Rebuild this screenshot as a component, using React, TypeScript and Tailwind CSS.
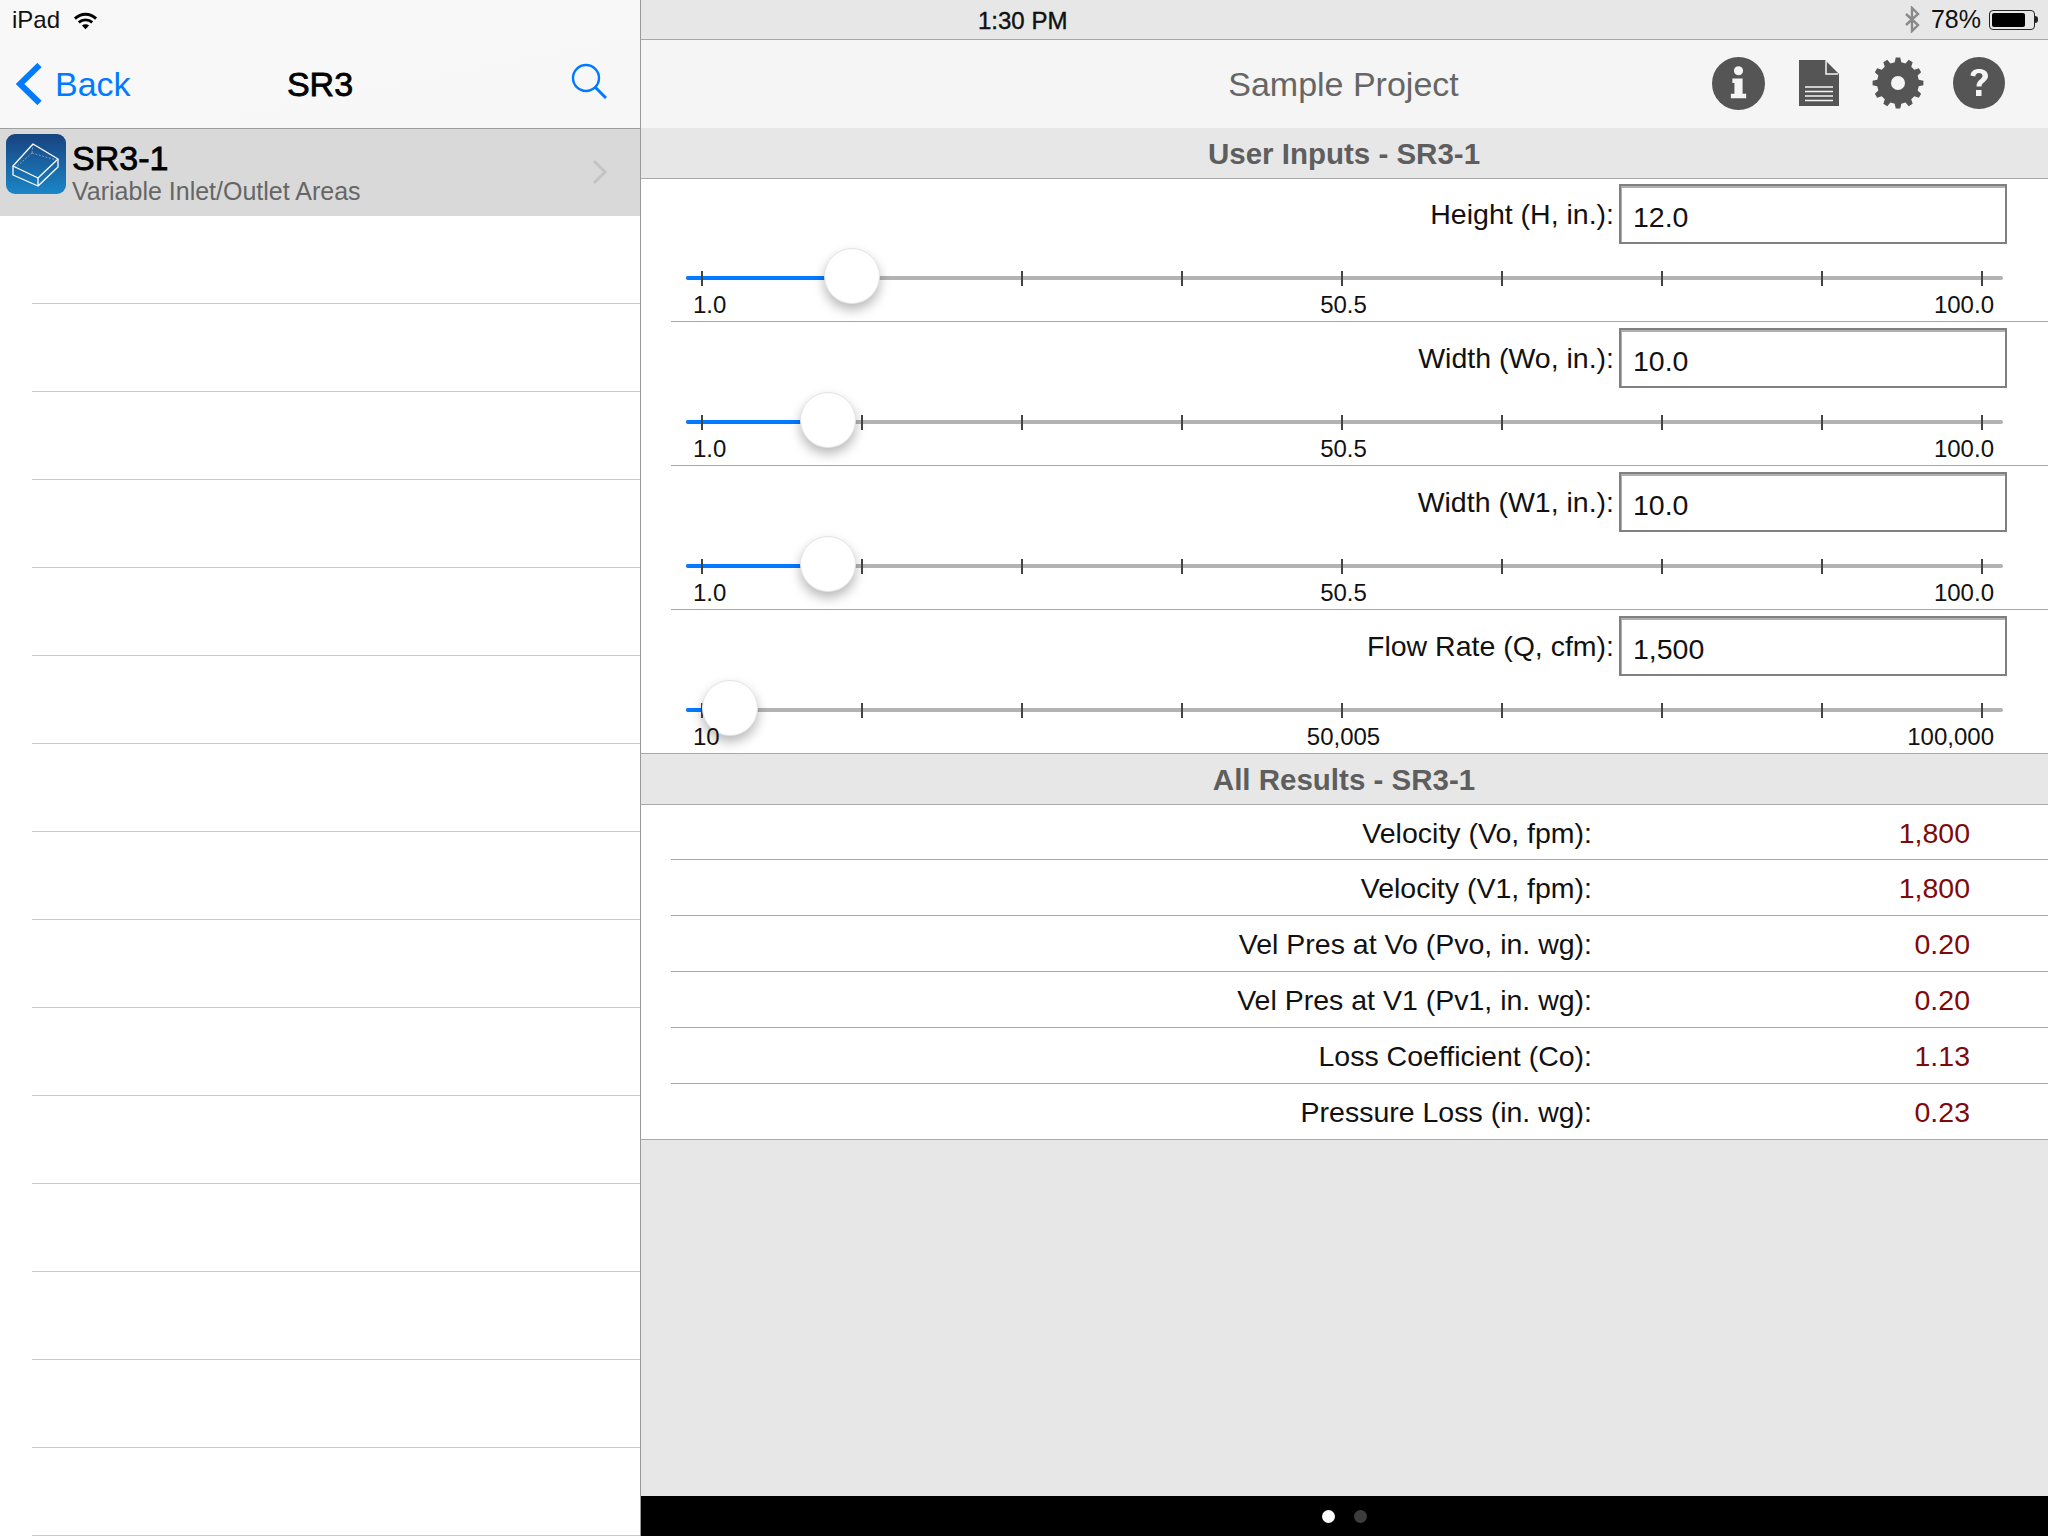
const TICKS = [0, 1, 2, 3, 4, 5, 6, 7, 8];

const INPUTS = [
  { label: "Height (H, in.):", value: "12.0", min: "1.0", mid: "50.5", max: "100.0", knob: 166 },
  { label: "Width (Wo, in.):", value: "10.0", min: "1.0", mid: "50.5", max: "100.0", knob: 142 },
  { label: "Width (W1, in.):", value: "10.0", min: "1.0", mid: "50.5", max: "100.0", knob: 142 },
  { label: "Flow Rate (Q, cfm):", value: "1,500", min: "10", mid: "50,005", max: "100,000", knob: 44 },
];

const RESULTS = [
  { label: "Velocity (Vo, fpm):", value: "1,800" },
  { label: "Velocity (V1, fpm):", value: "1,800" },
  { label: "Vel Pres at Vo (Pvo, in. wg):", value: "0.20" },
  { label: "Vel Pres at V1 (Pv1, in. wg):", value: "0.20" },
  { label: "Loss Coefficient (Co):", value: "1.13" },
  { label: "Pressure Loss (in. wg):", value: "0.23" },
];

// gear outline with 12 teeth, hole cut with evenodd
function gearPath() {
  const cx = 26, cy = 26, teeth = 12, outer = 25.5, inner = 21;
  const step = (Math.PI * 2) / teeth;
  let d = "";
  for (let i = 0; i < teeth; i++) {
    const a = i * step - Math.PI / 2;
    const pts: [number, number][] = [
      [inner, a - step * 0.3],
      [outer, a - step * 0.17],
      [outer, a + step * 0.17],
      [inner, a + step * 0.3],
    ];
    for (const [r, t] of pts) {
      d += `${d ? "L" : "M"}${(cx + r * Math.cos(t)).toFixed(2)} ${(cy + r * Math.sin(t)).toFixed(2)}`;
    }
  }
  return `${d}Z M${cx - 7} ${cy}a7 7 0 1 0 14 0a7 7 0 1 0 -14 0Z`;
}

function SectionHeader({ title }: { title: string }) {
  return (
    <div className="h-[51px] shrink-0 flex items-center justify-center pt-[2px] pr-[1px] bg-[#e7e7e7] border-b border-[#a8a8a8] text-[29.5px] font-bold text-[#5e5e5e]">
      {title}
    </div>
  );
}

function InputRow({ item, first }: { item: (typeof INPUTS)[number]; first: boolean }) {
  return (
    <div className={first ? "h-[143px] ml-[30px] pt-[5px] border-b border-[#a8a8a8]" : "h-[144px] ml-[30px] pt-[6px] border-b border-[#a8a8a8]"}>
      <div className="flex items-center justify-end pr-[41px]">
        <span className="mr-[5px] text-[28.5px] leading-[60px] h-[60px] text-[#111]">{item.label}</span>
        <div className="w-[388px] h-[60px] flex items-center pl-[12px] pt-[7px] bg-white border-2 border-[#808080] shadow-[inset_1px_2px_0_#b0b0b0] text-[28.5px] text-[#111]">
          {item.value}
        </div>
      </div>
      <div className="relative ml-[15px] w-[1317px] mt-[27px]">
        <div className="absolute left-0 right-0 top-[5px] h-[4px] rounded-full bg-[#b3b3b3]" />
        <div className="absolute left-0 top-[5px] h-[4px] rounded-l-full bg-[#007aff]" style={{ width: item.knob }} />
        <div className="relative flex justify-between pl-[15px] pr-[20px] h-[15px]">
          {TICKS.map((t) => (
            <div key={t} className="w-[2px] h-[15px] bg-[#444]" />
          ))}
        </div>
        <div
          className="absolute top-[-23px] w-[56px] h-[56px] rounded-full bg-white border border-[#e4e4e4] shadow-[0_6px_12px_rgba(0,0,0,0.28)] z-10"
          style={{ left: item.knob - 28 }}
        />
        <div className="relative z-20 grid grid-cols-3 mt-[5px] pl-[7px] pr-[9px] text-[24px] leading-[28px] text-[#111]">
          <span>{item.min}</span>
          <span className="text-center">{item.mid}</span>
          <span className="text-right">{item.max}</span>
        </div>
      </div>
    </div>
  );
}

function ResultRow({ item, first, last }: { item: (typeof RESULTS)[number]; first: boolean; last: boolean }) {
  return (
    <div className={`${first ? "h-[55px]" : "h-[56px]"} ${last ? "" : "ml-[30px]"} flex items-center pt-[2px] border-b border-[#a8a8a8] text-[28.5px] text-[#111]`}>
      <span className={`${last ? "w-[951px]" : "w-[921px]"} text-right`}>{item.label}</span>
      <span className="w-[378px] text-right text-[#7d0a0a]">{item.value}</span>
    </div>
  );
}

function BoxIcon() {
  return (
    <div className="w-[60px] h-[60px] rounded-[9px] bg-gradient-to-b from-[#17437f] to-[#1a86c8]">
      <svg viewBox="0 0 60 60" className="w-[60px] h-[60px]" fill="none" stroke="#fff" strokeWidth="1.3" strokeLinejoin="round">
        <path d="M7 32 27 10 52 25 32 44Z" />
        <path d="M7 32v9l25 11 20-19v-8M32 44v8" />
        <path d="M27 10l-1 9 M26 19l-17 15 M26 19l24 7" strokeWidth="0.6" strokeDasharray="2 1.5" opacity="0.7" />
      </svg>
    </div>
  );
}

export default function App() {
  return (
    <div className="w-[2048px] h-[1536px] flex overflow-hidden bg-white font-['Liberation_Sans',Arial,sans-serif]">
      {/* master list */}
      <div className="w-[641px] shrink-0 flex flex-col border-r border-[#9a9a9a]">
        <div className="h-[129px] shrink-0 bg-gradient-to-br from-[#f8f8f8] via-[#f8f8f8] to-[#f7f7f7] border-b border-[#a0a0a0]">
          <div className="h-[40px] flex items-center pl-[12px] text-[24px] text-[#111]">
            <span>iPad</span>
            <svg viewBox="0 0 26 19" className="ml-[13px] w-[25px] h-[19px]" fill="none" stroke="#000" strokeWidth="3">
              <path d="M2 7.500c6.500-6 15.500-6 22 0" />
              <path d="M6 11.500c4-3.500 10-3.500 14 0" />
              <path d="M13 18.500 9.300 14.600c2-1.700 5.400-1.700 7.400 0Z" fill="#000" stroke="none" />
            </svg>
          </div>
          <div className="relative h-[88px] flex items-center pl-[16px] text-[#007aff]">
            <svg viewBox="0 0 26 42" className="w-[26px] h-[42px]" fill="none" stroke="#007aff" strokeWidth="6">
              <path d="M23.500 2 4 21l19.500 19" />
            </svg>
            <span className="ml-[13px] text-[34px]">Back</span>
            <span className="absolute left-0 right-0 text-center text-[34px] text-black [-webkit-text-stroke:0.8px_#000]">SR3</span>
            <svg viewBox="0 0 36 36" className="ml-auto mr-[33px] mt-[-6px] w-[36px] h-[36px]" fill="none" stroke="#007aff" strokeWidth="2.4">
              <circle cx="15" cy="15" r="13" />
              <path d="M24 24 35 35" strokeWidth="3" />
            </svg>
          </div>
        </div>
        <div className="h-[87px] shrink-0 flex items-start bg-[#d9d9d9] pl-[6px] pt-[5px]">
          <BoxIcon />
          <div className="ml-[6px] flex flex-col">
            <span className="text-[34px] leading-[38px] mt-[5px] text-black [-webkit-text-stroke:0.8px_#000]">SR3-1</span>
            <span className="text-[25px] leading-[30px] mt-[-1px] text-[#666]">Variable Inlet/Outlet Areas</span>
          </div>
          <svg viewBox="0 0 16 26" className="ml-auto mr-[32px] mt-[25px] w-[16px] h-[26px]" fill="none" stroke="#c4c4c4" strokeWidth="3">
            <path d="M2 2l11 11L2 24" />
          </svg>
        </div>
        {Array.from({ length: 15 }).map((_, i) => (
          <div key={i} className="h-[88px] shrink-0 ml-[32px] border-b border-[#c8c8c8]" />
        ))}
      </div>

      {/* detail pane */}
      <div className="flex-1 flex flex-col min-w-0 bg-[#e7e7e7]">
        <div className="h-[40px] shrink-0 flex items-center border-b border-[#a8a8a8] text-[#111]">
          <span className="ml-[337px] pt-[2px] text-[24px] [-webkit-text-stroke:0.4px_#111]">1:30 PM</span>
          <svg viewBox="0 0 18 27" className="ml-auto w-[18px] h-[27px]" fill="none" stroke="#8a8a8a" strokeWidth="2.4">
            <path d="M3 8l12 11-6 6V2l6 6L3 19" />
          </svg>
          <span className="ml-[10px] text-[25px]">78%</span>
          <div className="ml-[8px] mr-[10px] flex items-center">
            <div className="w-[46px] h-[20px] rounded-[4px] border border-[#222] p-[2px]">
              <div className="w-[33px] h-full rounded-[2px] bg-black" />
            </div>
            <div className="w-[3px] h-[7px] rounded-r-full bg-[#222]" />
          </div>
        </div>
        <div className="relative h-[88px] shrink-0 flex items-center bg-[#f5f5f5]">
          <span className="absolute left-0 right-[2px] text-center text-[34px] text-[#666]">Sample Project</span>
          <div className="relative ml-auto mr-[43px] mt-[-2px] flex items-center">
            <svg viewBox="0 0 52 52" className="w-[53px] h-[53px]">
              <circle cx="26" cy="26" r="26" fill="#555" />
              <circle cx="26" cy="13.500" r="4.500" fill="#f5f5f5" />
              <path d="M20 21h10v15h3.500v4.500h-15V36H22V25.500h-2Z" fill="#f5f5f5" />
            </svg>
            <svg viewBox="0 0 40 46" className="ml-[34px] w-[40px] h-[46px]">
              <path d="M0 0h26l14 14v32H0Z" fill="#555" />
              <path d="M27 1v13h12" fill="none" stroke="#f5f5f5" strokeWidth="1.500" />
              <path d="M6 27h28M6 31.500h28M6 36h28M6 40.500h28" stroke="#f5f5f5" strokeWidth="1.500" />
            </svg>
            <svg viewBox="0 0 52 52" className="ml-[33px] w-[52px] h-[52px]">
              <path d={gearPath()} fill="#555" fillRule="evenodd" />
            </svg>
            <svg viewBox="0 0 52 52" className="ml-[29px] w-[52px] h-[52px]">
              <circle cx="26" cy="26" r="26" fill="#555" />
              <path d="M17.500 18.500c.5-4.500 4-6.500 8.500-6.500 5 0 9 2.500 9 7 0 5.500-6.500 6-6.500 10.500h-5c0-6.500 6-7.500 6-10.500 0-1.800-1.500-3-3.500-3-2.200 0-3.500 1.300-3.800 3.500Z" fill="#f5f5f5" />
              <rect x="23" y="33" width="5.500" height="6" fill="#f5f5f5" />
            </svg>
          </div>
        </div>
        <SectionHeader title="User Inputs - SR3-1" />
        <div className="shrink-0 bg-white">
          {INPUTS.map((item, i) => (
            <InputRow key={item.label} item={item} first={i === 0} />
          ))}
        </div>
        <div className="shrink-0 -mt-px border-t border-[#a8a8a8]">
          <SectionHeader title="All Results - SR3-1" />
        </div>
        <div className="shrink-0 bg-white">
          {RESULTS.map((item, i) => (
            <ResultRow key={item.label} item={item} first={i === 0} last={i === RESULTS.length - 1} />
          ))}
        </div>
        <div className="flex-1" />
        <div className="h-[40px] shrink-0 flex items-center justify-center gap-[19px] bg-black">
          <div className="w-[13px] h-[13px] rounded-full bg-white" />
          <div className="w-[13px] h-[13px] rounded-full bg-[#3d3d3d]" />
        </div>
      </div>
    </div>
  );
}
